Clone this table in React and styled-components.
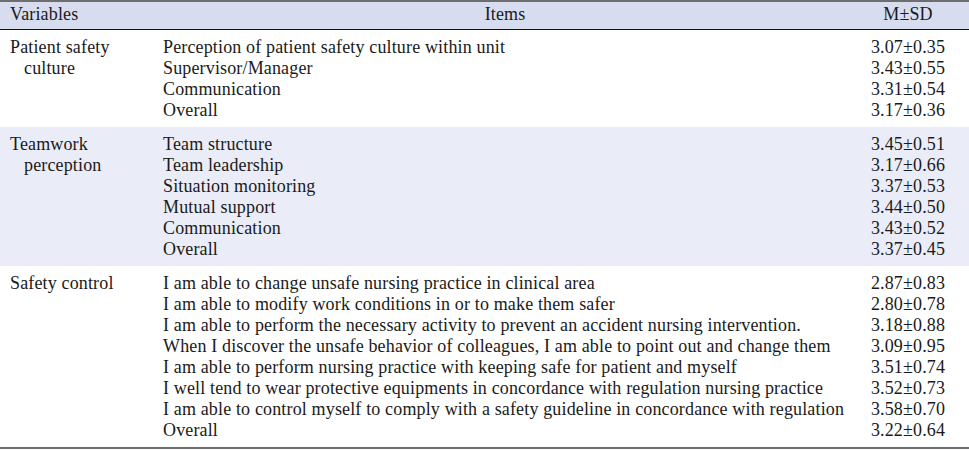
import React from 'react'
import styled, { createGlobalStyle } from 'styled-components'

const GlobalStyle = createGlobalStyle`
  html, body {
    margin: 0;
    padding: 0;
    background: #fff;
  }
`

const groups = [
  {
    label: ['Patient safety', 'culture'],
    shaded: false,
    rows: [
      ['Perception of patient safety culture within unit', '3.07±0.35'],
      ['Supervisor/Manager', '3.43±0.55'],
      ['Communication', '3.31±0.54'],
      ['Overall', '3.17±0.36'],
    ],
  },
  {
    label: ['Teamwork', 'perception'],
    shaded: true,
    rows: [
      ['Team structure', '3.45±0.51'],
      ['Team leadership', '3.17±0.66'],
      ['Situation monitoring', '3.37±0.53'],
      ['Mutual support', '3.44±0.50'],
      ['Communication', '3.43±0.52'],
      ['Overall', '3.37±0.45'],
    ],
  },
  {
    label: ['Safety control'],
    shaded: false,
    rows: [
      ['I am able to change unsafe nursing practice in clinical area', '2.87±0.83'],
      ['I am able to modify work conditions in or to make them safer', '2.80±0.78'],
      ['I am able to perform the necessary activity to prevent an accident nursing intervention.', '3.18±0.88'],
      ['When I discover the unsafe behavior of colleagues, I am able to point out and change them', '3.09±0.95'],
      ['I am able to perform nursing practice with keeping safe for patient and myself', '3.51±0.74'],
      ['I well tend to wear protective equipments in concordance with regulation nursing practice', '3.52±0.73'],
      ['I am able to control myself to comply with a safety guideline in concordance with regulation', '3.58±0.70'],
      ['Overall', '3.22±0.64'],
    ],
  },
]

const Table = styled.table`
  width: 969px;
  table-layout: fixed;
  border-collapse: collapse;
  font-family: 'Liberation Serif', 'Times New Roman', serif;
  font-size: 18px;
  letter-spacing: 0.15px;
  color: #1a1a1a;
  border-top: 2px solid #6e6e6e;
  border-bottom: 2px solid #6e6e6e;
`

const HeadRow = styled.tr`
  background: #d7ddef;
  border-bottom: 1px solid #111;
`

const Th = styled.th`
  font-weight: normal;
  height: 28px;
  padding: 0 0 1px;
  text-align: ${p => p.$align || 'center'};
  padding-left: ${p => (p.$align === 'left' ? '10px' : '0')};
  width: ${p => p.$width};
  box-sizing: border-box;
`

const Group = styled.tr`
  background: ${p => (p.$shaded ? '#eaedf7' : '#fff')};
  vertical-align: top;
`

const Cell = styled.td`
  padding: 7px 0 6px;
  padding-left: ${p => p.$left || '0'};
  text-align: ${p => p.$align || 'left'};
`

const Line = styled.div`
  height: 21px;
  line-height: 21px;
  white-space: nowrap;
`

const LabelLine = styled(Line)`
  padding-left: ${p => (p.$indent ? '14px' : '0')};
`

export default function App() {
  return (
    <>
      <GlobalStyle />
      <Table>
        <thead>
          <HeadRow>
            <Th $align="left" $width="163px">Variables</Th>
            <Th $width="684px">Items</Th>
            <Th $width="122px">M±SD</Th>
          </HeadRow>
        </thead>
        <tbody>
          {groups.map((g, i) => (
            <Group key={i} $shaded={g.shaded}>
              <Cell $left="10px">
                {g.label.map((l, j) => (
                  <LabelLine key={j} $indent={j > 0}>{l}</LabelLine>
                ))}
              </Cell>
              <Cell>
                {g.rows.map((r, j) => (
                  <Line key={j}>{r[0]}</Line>
                ))}
              </Cell>
              <Cell $align="center">
                {g.rows.map((r, j) => (
                  <Line key={j}>{r[1]}</Line>
                ))}
              </Cell>
            </Group>
          ))}
        </tbody>
      </Table>
    </>
  )
}
